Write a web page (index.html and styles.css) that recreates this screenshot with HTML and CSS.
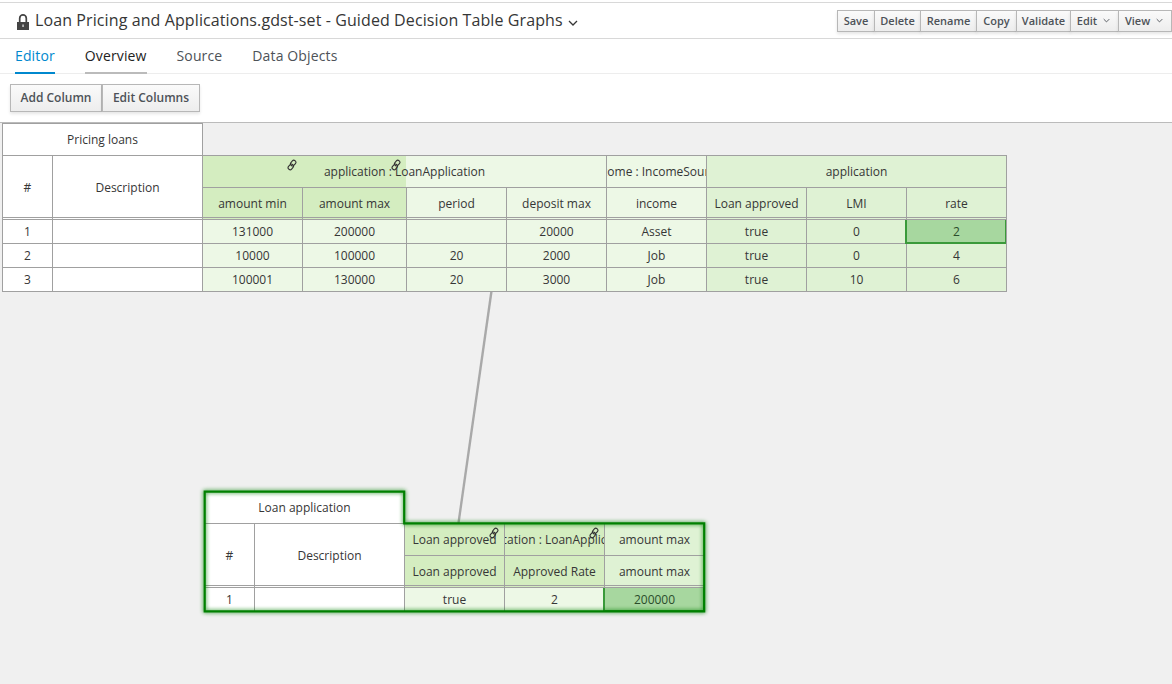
FILE: index.html
```html
<!DOCTYPE html>
<html lang="en">
<head>
<meta charset="utf-8">
<title>Guided Decision Table Graphs</title>
<link rel="stylesheet" href="styles.css">
</head>
<body>
<svg class="defs" aria-hidden="true">
  <symbol id="link" viewBox="0 0 12 12">
    <g fill="none" stroke="#333" stroke-width="1.1">
      <rect x="5.2" y="1.1" width="4" height="6" rx="1.9" transform="rotate(40 7.2 4.1)"/>
      <rect x="2.8" y="4.9" width="4" height="6" rx="1.9" transform="rotate(40 4.8 7.9)"/>
    </g>
  </symbol>
  <symbol id="chevron" viewBox="0 0 10 6"><path d="M1 1l4 4 4-4" fill="none" stroke="currentColor" stroke-width="1.3"/></symbol>
</svg>
<header class="title-bar">
  <svg class="lock" viewBox="0 0 12 16"><path d="M2.7 8V4.2a3.3 3.3 0 0 1 6.6 0V8" fill="none" stroke="#444" stroke-width="1.7"/><path d="M0 8h12v8H0z" fill="#444"/><path d="M5.3 10.5h1.5v2.5H5.3z" fill="#ccc"/></svg>
  <h1 class="title">Loan Pricing and Applications.gdst-set - Guided Decision Table Graphs</h1>
  <svg class="title-chevron"><use href="#chevron"/></svg>
  <div class="actions">
    <button class="btn save">Save</button><button class="btn delete">Delete</button><button class="btn rename">Rename</button><button class="btn copy">Copy</button><button class="btn validate">Validate</button><button class="btn edit">Edit<svg class="caret"><use href="#chevron"/></svg></button><button class="btn view">View<svg class="caret"><use href="#chevron"/></svg></button>
  </div>
</header>
<nav class="tabs">
  <a class="tab active">Editor</a><a class="tab hover">Overview</a><a class="tab">Source</a><a class="tab">Data Objects</a>
</nav>
<div class="toolbar"><button class="btn large add">Add Column</button><button class="btn large columns">Edit Columns</button></div>
<main class="canvas">
  <svg class="connector" viewBox="0 0 1172 561"><path d="M491.5 168L458.5 400" stroke="#a9a9a9" stroke-width="2.4"/></svg>

  <section class="table pricing">
    <div class="cell caption">Pricing loans</div>
    <div class="beside-caption"></div>
    <div class="cell head num">#</div>
    <div class="cell head desc">Description</div>
    <div class="cell fact span4 split">application : LoanApplication
      <svg class="link first"><use href="#link"/></svg><svg class="link second"><use href="#link"/></svg></div>
    <div class="cell fact cond"><span>income : IncomeSource</span></div>
    <div class="cell fact span3 act edge">application</div>
    <div class="cell head linked">amount min</div>
    <div class="cell head linked">amount max</div>
    <div class="cell head cond">period</div>
    <div class="cell head cond">deposit max</div>
    <div class="cell head cond">income</div>
    <div class="cell head act">Loan approved</div>
    <div class="cell head act">LMI</div>
    <div class="cell head act edge">rate</div>

    <div class="cell">1</div><div class="cell"></div><div class="cell cond">131000</div><div class="cell cond">200000</div><div class="cell cond"></div><div class="cell cond">20000</div><div class="cell cond">Asset</div><div class="cell act">true</div><div class="cell act">0</div><div class="cell act edge selected">2</div>
    <div class="cell">2</div><div class="cell"></div><div class="cell cond">10000</div><div class="cell cond">100000</div><div class="cell cond">20</div><div class="cell cond">2000</div><div class="cell cond">Job</div><div class="cell act">true</div><div class="cell act">0</div><div class="cell act edge">4</div>
    <div class="cell last">3</div><div class="cell last"></div><div class="cell cond last">100001</div><div class="cell cond last">130000</div><div class="cell cond last">20</div><div class="cell cond last">3000</div><div class="cell cond last">Job</div><div class="cell act last">true</div><div class="cell act last">10</div><div class="cell act last edge">6</div>
  </section>

  <section class="table loan">
    <div class="cell caption">Loan application</div>
    <div class="beside-caption"></div>
    <div class="cell head num">#</div>
    <div class="cell head desc">Description</div>
    <div class="cell fact linked"><span>Loan approved</span><svg class="link"><use href="#link"/></svg></div>
    <div class="cell fact linked"><span>application : LoanApplication</span><svg class="link"><use href="#link"/></svg></div>
    <div class="cell fact act edge">amount max</div>
    <div class="cell head linked">Loan approved</div>
    <div class="cell head linked">Approved Rate</div>
    <div class="cell head act edge">amount max</div>
    <div class="cell last">1</div><div class="cell last"></div><div class="cell cond last">true</div><div class="cell cond last">2</div><div class="cell act last edge selected">200000</div>
    <svg class="outline" viewBox="0 0 513 133"><path d="M6.7 6.7H206.2V38.3H506.2V126.3H6.7z"/></svg>
  </section>
</main>
</body>
</html>
```
FILE: styles.css
```css
* { box-sizing: border-box; }
body { margin: 0; width: 1172px; height: 684px; overflow: hidden; display: flex; flex-direction: column; background: #fff; font-family: "Open Sans", sans-serif; font-size: 12px; color: #363636; }
.defs { display: none; }
.title-bar { height: 37px; margin-top: 2px; border-top: 1px solid #d8d8d8; border-bottom: 1px solid #d8d8d8; display: flex; align-items: flex-start; padding-left: 17px; }
.lock { width: 12px; height: 16px; margin: 11px 6px 0 0; }
.title { margin: 5px 0 0; font-size: 16px; font-weight: 400; line-height: 24px; letter-spacing: .1px; white-space: nowrap; }
.title-chevron { width: 10px; height: 6px; margin: 17px 0 0 5px; }
.actions { display: flex; margin: 7px 0 0 auto; }
.btn { height: 22px; padding: 0; margin: 0 0 0 -1px; border: 1px solid #b7b7b7; background: linear-gradient(#fafafa, #ededed); box-shadow: 0 2px 3px rgba(3, 3, 3, .1); color: #4d5258; font: 600 11px/18px "Open Sans", sans-serif; white-space: nowrap; flex: none; }
.save { width: 38px; }
.delete { width: 47px; }
.rename { width: 57px; }
.copy { width: 41px; }
.validate { width: 55px; }
.edit { width: 49px; }
.view { width: 54px; }
.caret { width: 7px; height: 5px; margin: 0 2px 2px 6px; }
.tabs { height: 35px; border-bottom: 1px solid #ededed; display: flex; gap: 30px; padding-left: 15px; }
.tab { height: 35px; font-size: 14px; line-height: 34px; letter-spacing: .13px; color: #4d5258; }
.active { color: #0088ce; border-bottom: 2px solid #0088ce; }
.hover { color: #222; border-bottom: 2px solid #bbb; }
.toolbar { height: 49px; padding: 10px 0 0 10px; border-bottom: 1px solid #bbb; display: flex; }
.large { height: 28px; font-size: 12px; line-height: 24px; margin: 0; }
.add { width: 92px; }
.columns { width: 98px; }
.canvas { position: relative; flex: 1; background: #f0f0f0; }
.connector { position: absolute; left: 0; top: 0; width: 1172px; height: 561px; }
.table { position: absolute; display: grid; }
.pricing { left: 2px; top: 0; grid-template-columns: 50px 150px 100px 104px 100px 100px 100px 100px 100px 101px; grid-template-rows: 32px 32px 32px 24px 24px 25px; }
.loan { left: 204px; top: 368px; grid-template-columns: 50px 150px 100px 100px 101px; grid-template-rows: 32px 32px 32px 25px; }
.cell { position: relative; display: flex; align-items: center; justify-content: center; min-width: 0; background: #fff; border-left: 1px solid #a0a0a0; border-top: 1px solid #a0a0a0; white-space: nowrap; }
.caption { grid-column: 1 / 3; grid-row: 1; margin-right: -1px; border-right: 1px solid #a0a0a0; }
.beside-caption { grid-column: 3 / -1; grid-row: 1; }
.head { grid-row: 3; padding-bottom: 1px; }
.head::after { content: ""; position: absolute; left: 0; right: 0; bottom: 1px; height: 1px; background: #a0a0a0; }
.num, .desc { grid-row: 2 / 4; padding-bottom: 0; }
.num { grid-column: 1; }
.desc { grid-column: 2; }
.fact { grid-row: 2; }
.span4 { grid-column: 3 / 7; }
.span3 { grid-column: 8 / 11; }
.split { background: linear-gradient(90deg, #d4edc0 203px, #edf8e6 203px); }
.linked { background: #d4edc0; }
.cond { background: #edf8e6; }
.act { background: #dff2d4; }
.edge { border-right: 1px solid #a0a0a0; }
.last { border-bottom: 1px solid #a0a0a0; }
.fact > span { width: 100%; display: flex; justify-content: center; overflow: hidden; }
.link { position: absolute; width: 12px; height: 12px; top: 3px; right: 4px; }
.link.first { left: 83px; }
.link.second { left: 187px; }
.selected { background: #a7d79f; color: #2b4d2b; }
.selected::before { content: ""; position: absolute; left: -2px; right: 0; top: 0; bottom: -1px; border: solid #3a9a3a; border-width: 0 1px 2px 2px; z-index: 1; }
.outline { position: absolute; left: -6px; top: -6px; width: 513px; height: 133px; overflow: visible; z-index: 2; }
.outline path { fill: none; stroke: #008000; stroke-width: 2.2; filter: drop-shadow(0 0 2px #008000); }
```
